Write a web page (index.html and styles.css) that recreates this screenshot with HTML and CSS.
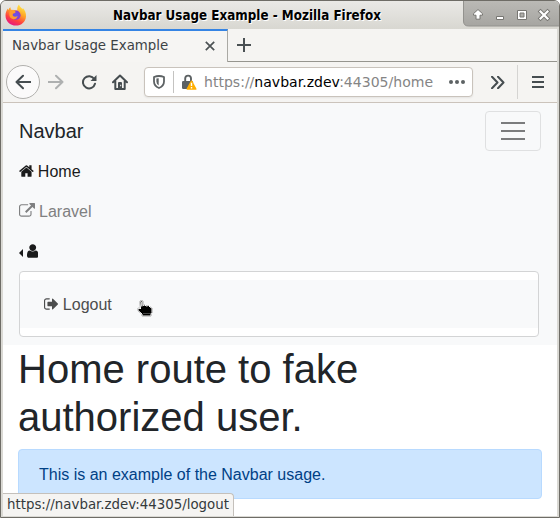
FILE: index.html
```html
<!DOCTYPE html>
<html lang="en">
<head>
<meta charset="utf-8">
<title>Navbar Usage Example</title>
<link rel="stylesheet" href="styles.css">
</head>
<body>
<div class="window">
  <header class="titlebar">
    <svg class="firefox" viewBox="0 0 22 22">
      <defs>
        <linearGradient id="fire" x1=".8" y1="0" x2=".3" y2="1"><stop offset="0" stop-color="#fff04a"/><stop offset=".4" stop-color="#ffa526"/><stop offset=".72" stop-color="#ff4040"/><stop offset="1" stop-color="#e31587"/></linearGradient>
        <radialGradient id="globe"><stop offset="0" stop-color="#5a5df0"/><stop offset="1" stop-color="#9139ca"/></radialGradient>
      </defs>
      <path fill="url(#fire)" d="M14 .6c.5 2 2.200 3 3.600 4.700l.3-1.200c2 2 3.400 5 3.100 8.300-.3 5.400-4.700 9.200-10 9.200C5 21.600.6 17.400.5 11.500c0-2.900.9-5 2.400-7l.3 1.700C4 4.600 4.500 3.800 5.400 3.200l.5 2.500 3.600.2 2.800.6C12 4.200 12.600 2 14 .6z"/>
      <circle cx="11" cy="11.200" r="4.600" fill="url(#globe)"/>
      <path fill="#ff9d2e" d="M5 6.500c2-.9 4-.4 5 .6 1 .9.700 2-.8 2.200-1.300.2-1.600.9-1.500 1.800.3 2 3 2.200 5 .9-.6 2.300-2.500 3.600-4.500 3.200-3.200-.6-5-4-3.200-8.700z"/>
    </svg>
    <h2 class="window-title">Navbar Usage Example - Mozilla Firefox</h2>
    <svg class="controls" viewBox="0 0 96 27">
      <defs><linearGradient id="metal" x2="0" y2="1"><stop stop-color="#bcbbb7"/><stop offset="1" stop-color="#a6a5a1"/></linearGradient></defs>
      <path fill="url(#metal)" stroke="#93928e" d="M.5-1V21q0 5 5 5H97V-1"/>
      <g stroke="#777672" stroke-width="1">
        <path fill="#fff" d="M15 9.500l4.500 4.200v1.500h-2.500v4h-4v-4h-2.500v-1.500z"/>
        <path fill="#fff" d="M33.500 16.500h7v3h-7z"/>
        <path fill="#fff" fill-rule="evenodd" d="M54.500 10.500h9v9h-9zM57 13v4h4v-4z"/>
      </g>
      <path d="M77.500 11.500l7 7m0-7l-7 7" stroke="#777672" stroke-width="4" stroke-linecap="square"/>
      <path d="M77.500 11.500l7 7m0-7l-7 7" stroke="#fff" stroke-width="2.200" stroke-linecap="square"/>
    </svg>
  </header>
  <div class="view">
    <div class="tabs">
      <div class="tab"><span>Navbar Usage Example</span>
        <svg width="10" height="10" viewBox="0 0 10 10"><path d="M.8.8l8.400 8.400m0-8.400L.8 9.200" stroke="#4c5254" stroke-width="1.700"/></svg>
      </div>
      <svg class="plus" width="14" height="14" viewBox="0 0 14 14"><path d="M7 0v14M0 7h14" stroke="#4a5053" stroke-width="2"/></svg>
    </div>
    <div class="toolbar">
      <div class="back"><svg width="16" height="16" viewBox="0 0 16 16"><path d="M15.500 8H1.500M8 1.800L1.500 8 8 14.200" class="stroke"/></svg></div>
      <svg class="forward" width="16" height="16" viewBox="0 0 16 16"><path d="M.5 8h14M8 1.800L14.500 8 8 14.200" class="stroke"/></svg>
      <svg class="reload" width="16" height="16" viewBox="0 0 16 16"><path d="M13.200 5A6.100 6.100 0 1 0 14 9.800" class="stroke"/><path d="M15.500 1v6H9.500z" fill="#464d50"/></svg>
      <svg class="house" width="16" height="16" viewBox="0 0 16 16"><path d="M1 8.300L8 1.500l7 6.800M3.300 7v8h9.400V7" class="stroke"/><path fill="#464d50" fill-rule="evenodd" d="M6 15V9q0-1 1-1h2q1 0 1 1v6zM8.200 10.800v1.400h1v-1.400z"/></svg>
      <div class="urlbar">
        <svg class="shield" width="12" height="14" viewBox="0 0 12 14"><path d="M1 2Q3.500 1 6 1t5 1v4.500Q11 11 6 13 1 11 1 6.500z" fill="none" stroke="#5d6264" stroke-width="1.800" stroke-linejoin="round"/><path d="M5.700 3.200v7.200Q3.400 9 3.400 6.500V3.600z" fill="#5d6264"/></svg>
        <i class="separator"></i>
        <svg class="lock" width="15" height="16" viewBox="0 0 15 16"><path d="M3.200 8V4.500a2.900 2.900 0 0 1 5.800 0V7" fill="none" stroke="#5c6163" stroke-width="1.900"/><rect y="7" width="11" height="8" rx="1.300" fill="#5c6163"/><path d="M9.500 7.200L13.800 15H5.200z" fill="#ffae00" stroke="#ffae00" stroke-width="1.500" stroke-linejoin="round"/><path d="M9.500 8.700v3.300m0 1v1.500" stroke="#fff" stroke-width="1.400"/></svg>
        <span class="url">https://<b>navbar.zdev</b>:44305/home</span>
        <svg class="dots" width="16" height="4" viewBox="0 0 16 4"><g fill="#5d6264"><circle cx="2" cy="2" r="2"/><circle cx="8" cy="2" r="2"/><circle cx="14" cy="2" r="2"/></g></svg>
      </div>
      <svg class="more" width="14" height="13" viewBox="0 0 14 13"><path d="M1 .8l5.500 5.700L1 12.200M7 .8l5.500 5.700L7 12.200" class="stroke"/></svg>
      <i class="divider"></i>
      <svg class="menu" width="12" height="12" viewBox="0 0 12 12"><path d="M0 1h12M0 6h12M0 11h12" stroke="#464d50" stroke-width="2"/></svg>
    </div>
    <nav class="navbar">
      <div class="navbar-head">
        <span class="brand">Navbar</span>
        <div class="toggler"><i></i><i></i><i></i></div>
      </div>
      <div class="nav-link active"><svg class="fa w13" viewBox="64 0 1664 1792"><path d="M1472 992v480q0 26-19 45t-45 19h-384v-384h-256v384h-384q-26 0-45-19t-19-45v-480q0-1 .5-3t.5-3l575-474 575 474q1 2 1 6zm223-69l-62 74q-8 9-21 11h-3q-13 0-21-7l-692-577-692 577q-12 8-24 7-13-2-21-11l-62-74q-8-10-7-23.500t11-21.500l719-599q32-26 76-26t76 26l244 204v-195q0-14 9-23t23-9h192q14 0 23 9t9 23v408l219 182q10 8 11 21.500t-7 23.500z"/></svg><span>Home</span></div>
      <div class="nav-link"><svg class="fa w14" viewBox="0 0 1792 1792"><path d="M1408 928v320q0 119-84.500 203.500t-203.500 84.500h-832q-119 0-203.500-84.500t-84.500-203.500v-832q0-119 84.500-203.500t203.500-84.500h704q14 0 23 9t9 23v64q0 14-9 23t-23 9h-704q-66 0-113 47t-47 113v832q0 66 47 113t113 47h832q66 0 113-47t47-113v-320q0-14 9-23t23-9h64q14 0 23 9t9 23zm384-864v512q0 26-19 45t-45 19-45-19l-176-176-652 652q-10 10-23 10t-23-10l-114-114q-10-10-10-23t10-23l652-652-176-176q-19-19-19-45t19-45 45-19h512q26 0 45 19t19 45z"/></svg><span>Laravel</span></div>
      <div class="nav-link active"><i class="caret"></i><svg class="fa w10" viewBox="256 0 1280 1792"><path d="M1536 1399q0 109-62.500 187t-150.500 78h-854q-88 0-150.500-78t-62.500-187q0-85 8.500-160.500t31.500-152 58.500-131 94-89 134.500-34.500q131 128 313 128t313-128q76 0 134.500 34.500t94 89 58.500 131 31.500 152 8.500 160.500zm-256-887q0 159-112.500 271.500t-271.500 112.500-271.500-112.500-112.500-271.500 112.500-271.500 271.500-112.500 271.500 112.500 112.500 271.500z"/></svg></div>
      <div class="dropdown">
        <div class="item"><svg class="fa w13" viewBox="64 0 1664 1792"><path d="M704 1440q0 4 1 20t.5 26.500-3 23.500-10 19.500-20.500 6.500h-320q-119 0-203.500-84.500t-84.500-203.500v-704q0-119 84.500-203.500t203.500-84.500h320q13 0 22.500 9.500t9.500 22.500q0 4 1 20t.5 26.500-3 23.500-10 19.500-20.500 6.500h-320q-66 0-113 47t-47 113v704q0 66 47 113t113 47h312l11.500 1 11.500 3 8 5.500 7 9 2 13.500zm928-544q0 26-19 45l-544 544q-19 19-45 19t-45-19-19-45v-288h-448q-26 0-45-19t-19-45v-384q0-26 19-45t45-19h448v-288q0-26 19-45t45-19 45 19l544 544q19 19 19 45z"/></svg><span>Logout</span></div>
      </div>
    </nav>
    <main>
      <h1>Home route to fake authorized user.</h1>
      <div class="alert">This is an example of the Navbar usage.</div>
    </main>
    <div class="status">https://navbar.zdev:44305/logout</div>
  </div>
</div>
<svg class="cursor" width="17" height="18" viewBox="0 0 17 18"><path d="M3 3q0-1.500 1.500-1.500T6 3v3.500l1.500-.5 2 1 2-.5 1.500 1.500L15 9v4.500l-1 1.500v2H5v-2L1 11.500V9.300h2L3.500 10z" fill="#000" stroke="#fff" stroke-width="1"/><path d="M4.800 2.500v5" stroke="#fff" stroke-width="1.200"/><path d="M6.500 14.500h1m1 0h1m1 0h1m1 0h1" stroke="#888"/></svg>
</body>
</html>
```
FILE: styles.css
```css
* { box-sizing: border-box; }
html { background: #fff; }
body { margin: 0; font: 16px/24px "Liberation Sans", sans-serif; color: #212529; overflow: hidden; }
svg { flex: none; display: block; fill: none; }
.window { width: 560px; height: 518px; border: 1px solid #6e6c66; border-radius: 6px 6px 0 0; background: #dad9d4; padding: 0 2px 2px; overflow: hidden; }
.titlebar { height: 28px; margin: 0 -2px; display: flex; background: linear-gradient(#eae9e6, #d8d7d1); font-family: "DejaVu Sans Condensed", "DejaVu Sans", sans-serif; font-stretch: condensed; }
.firefox { width: 22px; height: 22px; margin: 3px 0 0 4px; }
.window-title { margin: 1px 0 0 86px; width: 350px; font-size: 13.300px; line-height: 27px; font-weight: bold; color: #000; text-shadow: 1px 1px #fff; white-space: nowrap; }
.controls { width: 96px; height: 27px; margin-top: -1px; }
.view { position: relative; height: 487px; background: #fff; overflow: hidden; }
.tabs, .toolbar, .status { font-family: "DejaVu Sans Condensed", "DejaVu Sans", sans-serif; font-stretch: condensed; font-size: 14.850px; }
.tabs { height: 33px; display: flex; align-items: center; background: #f5f4f2; border-bottom: 1px solid #96958f; }
.tab { width: 225px; height: 33px; margin-bottom: -1px; border-top: 2px solid #3584e4; border-right: 1px solid #aaa9a4; background: #f6f5f3; display: flex; align-items: center; justify-content: space-between; padding: 0 12px 3px 9px; color: #3c4245; white-space: nowrap; }
.tab svg { margin-top: 1px; }
.plus { margin-left: 9px; }
.toolbar { height: 41px; display: flex; align-items: center; background: #f5f4f2; border-bottom: 1px solid #cbc3bb; }
.stroke { stroke: #464d50; stroke-width: 2; stroke-linecap: round; stroke-linejoin: round; }
.back { width: 34px; height: 34px; margin-left: 3px; border: 1px solid #b1b0ad; border-radius: 50%; background: #fbfafa; display: flex; align-items: center; justify-content: center; }
.forward { margin-left: 8px; opacity: .4; }
.reload { margin-left: 17px; }
.house { margin-left: 15px; }
.urlbar { width: 329px; height: 30px; margin-left: 16px; border: 1px solid #c9c3bc; border-radius: 4px; background: #fff; display: flex; align-items: center; padding-left: 8px; box-shadow: 0 1px 2px #0001; }
.separator { width: 1px; height: 22px; margin: 0 8px; background: #c4c3c1; }
.url { width: 232px; margin-left: 7px; font-family: "DejaVu Sans", sans-serif; font-stretch: normal; font-size: 14.060px; color: #858585; white-space: nowrap; }
.url b { color: #000; font-weight: normal; }
.dots { margin-left: 13px; }
.more { margin-left: 18px; }
.divider { width: 1px; height: 34px; margin-left: 12px; background: #d5d4d2; }
.menu { margin-left: 14px; }
.navbar { height: 242px; padding: 8px 16px; background: #f8f9fa; }
.navbar-head { height: 40px; display: flex; align-items: center; justify-content: space-between; }
.brand { font-size: 20px; line-height: 30px; }
.toggler { width: 56px; height: 40px; border: 1px solid #dfe0e1; border-radius: 4px; display: flex; flex-direction: column; align-items: center; justify-content: center; gap: 6px; }
.toggler i { width: 24px; height: 2px; background: #7b7c7d; }
.nav-link { height: 40px; display: flex; align-items: center; color: #7f8081; }
.nav-link.active { color: #1a1b1b; }
.nav-link span, .item span { padding-top: 2px; }
.fa { height: 16px; margin-right: 4px; fill: currentColor; }
.w10 { width: 11.430px; }
.w13 { width: 14.860px; }
.w14 { width: 16px; }
.caret { border: 4.800px solid transparent; border-left: 0; border-right-color: currentColor; margin: 3px 4px 0 0; }
.dropdown { width: 520px; height: 66px; padding: 8px 0; background: #fff; border: 1px solid #d3d4d5; border-radius: 4px; }
.item { height: 48px; padding-left: 24px; display: flex; align-items: center; background: #f8f9fa; color: #4c4d4d; }
main { padding: 0 15px; }
h1 { margin: 0 0 8px; font-size: 40px; line-height: 48px; font-weight: normal; }
.alert { height: 50px; padding: 13px 20px 11px; border: 1px solid #b8daff; border-radius: 4px; background: #cce5ff; color: #004085; }
.status { position: absolute; left: 0; bottom: 0; height: 23px; width: 231px; padding-left: 4px; line-height: 21px; color: #343a3c; background: #f5f4f2; border: 1px solid #c4c0bb; border-left: 0; border-bottom: 0; border-radius: 0 4px 0 0; white-space: nowrap; }
.cursor { position: absolute; left: 137px; top: 299px; overflow: visible; filter: drop-shadow(0 0 .7px #444); }
```
